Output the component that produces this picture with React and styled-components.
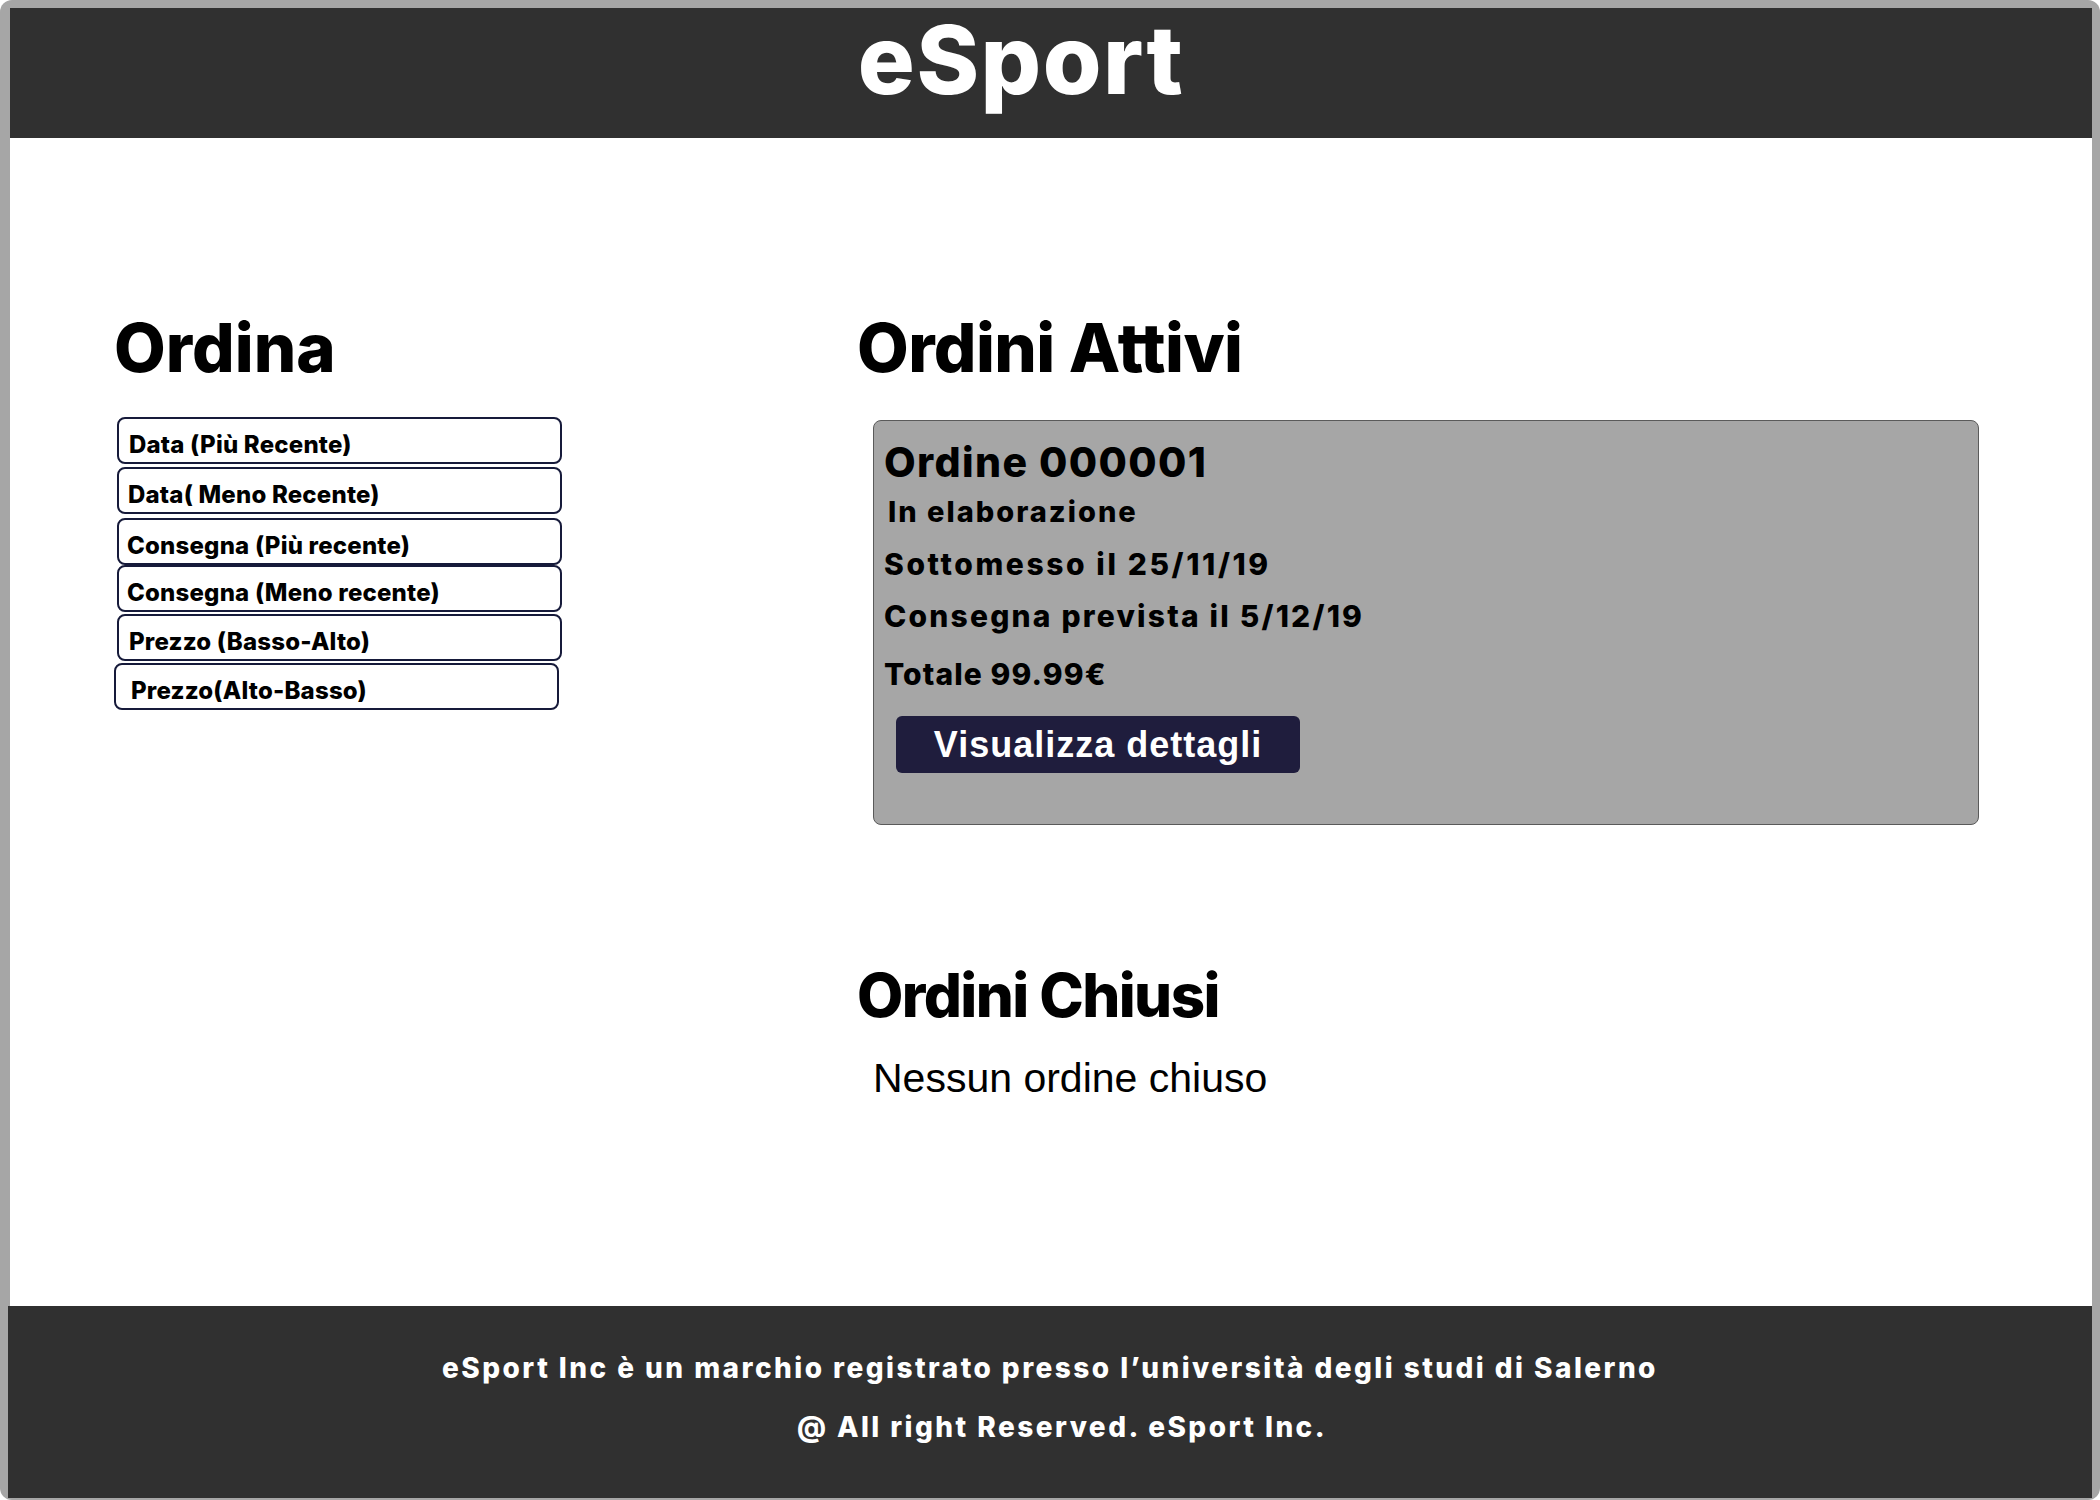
import React from "react";
import styled, { createGlobalStyle } from "styled-components";

const GlobalStyle = createGlobalStyle`
  html, body {
    margin: 0;
    padding: 0;
    background: #ffffff;
  }
  * {
    box-sizing: border-box;
  }
`;

const sortOptions = [
  { label: "Data (Più Recente)", gap: 0, pad: 10, shift: 0 },
  { label: "Data( Meno Recente)", gap: 3, pad: 9, shift: 0 },
  { label: "Consegna (Più recente)", gap: 4, pad: 8, shift: 0 },
  { label: "Consegna (Meno recente)", gap: 0, pad: 8, shift: 0 },
  { label: "Prezzo (Basso-Alto)", gap: 2, pad: 10, shift: 0 },
  { label: "Prezzo(Alto-Basso)", gap: 2, pad: 15, shift: -3 },
];

export default function App() {
  return (
    <>
      <GlobalStyle />
      <Frame>
        <Header>
          <Brand>eSport</Brand>
        </Header>

        <Main>
          <Column>
            <Title size={67}>Ordina</Title>
            <SortList>
              {sortOptions.map((opt) => (
                <SortButton
                  key={opt.label}
                  $gap={opt.gap}
                  $pad={opt.pad}
                  $shift={opt.shift}
                >
                  {opt.label}
                </SortButton>
              ))}
            </SortList>
          </Column>

          <Column>
            <Title size={67} $spacing={-0.6}>
              Ordini Attivi
            </Title>
            <OrderCard>
              <OrderTitle>Ordine 000001</OrderTitle>
              <OrderLine size={29} $top={14} $indent={4} $spacing={2}>
                In elaborazione
              </OrderLine>
              <OrderLine size={30} $top={23} $spacing={2.6}>
                Sottomesso il 25/11/19
              </OrderLine>
              <OrderLine size={30} $top={22} $spacing={2.2}>
                Consegna prevista il 5/12/19
              </OrderLine>
              <OrderLine size={30} $top={28} $spacing={1.1}>
                Totale 99.99€
              </OrderLine>
              <DetailButton>Visualizza dettagli</DetailButton>
            </OrderCard>

            <Title size={60} $top={140} $spacing={-1.6}>
              Ordini Chiusi
            </Title>
            <EmptyText>Nessun ordine chiuso</EmptyText>
          </Column>
        </Main>

        <Footer>
          <FooterLine>
            eSport Inc è un marchio registrato presso l’università degli studi
            di Salerno
          </FooterLine>
          <FooterLine $indent={24}>@ All right Reserved. eSport Inc.</FooterLine>
        </Footer>
      </Frame>
    </>
  );
}

const Frame = styled.div`
  width: 2100px;
  height: 1500px;
  background: #a6a6a6;
  border-radius: 12px;
  padding: 8px 8px 2px 10px;
  display: flex;
  flex-direction: column;
  font-family: Inter, "Noto Sans", sans-serif;
  font-variant-ligatures: none;
  color: #000;
`;

const Header = styled.header`
  height: 130px;
  background: #303030;
  display: flex;
  justify-content: center;
  align-items: flex-start;
  padding: 4px 60px 0 0;
`;

const Brand = styled.h1`
  margin: 0;
  font-size: 95px;
  line-height: 1;
  font-weight: 800;
  letter-spacing: 1.5px;
  color: #ffffff;
`;

const Main = styled.main`
  flex: 1;
  background: #ffffff;
  display: grid;
  grid-template-columns: 743px 1119px;
  align-items: start;
  padding: 176px 0 0 107px;
`;

const Column = styled.section`
  display: flex;
  flex-direction: column;
  align-items: flex-start;
`;

const Title = styled.h2`
  margin: ${(p) => p.$top || 0}px 0 0 -3px;
  font-size: ${(p) => p.size}px;
  letter-spacing: ${(p) => p.$spacing || 0}px;
  line-height: 1;
  font-weight: 800;
`;

const SortList = styled.div`
  margin-top: 36px;
  display: flex;
  flex-direction: column;
`;

const SortButton = styled.div`
  width: 445px;
  height: 47px;
  margin-top: ${(p) => p.$gap}px;
  margin-left: ${(p) => p.$shift}px;
  border: 2px solid #161a3a;
  border-radius: 8px;
  background: #ffffff;
  display: flex;
  align-items: flex-end;
  padding: 0 0 5px ${(p) => p.$pad}px;
  font-size: 24px;
  letter-spacing: 0.2px;
  line-height: 1;
  font-weight: 800;
`;

const OrderCard = styled.div`
  margin: 39px 0 0 13px;
  width: 1106px;
  height: 405px;
  background: #a6a6a6;
  border: 1px solid #5a5a5a;
  border-radius: 8px;
  padding: 21px 0 0 10px;
  display: flex;
  flex-direction: column;
  align-items: flex-start;
`;

const OrderTitle = styled.h3`
  margin: 0;
  font-size: 41px;
  letter-spacing: 1.4px;
  line-height: 1;
  font-weight: 800;
`;

const OrderLine = styled.p`
  margin: ${(p) => p.$top}px 0 0 ${(p) => p.$indent || 0}px;
  font-size: ${(p) => p.size}px;
  letter-spacing: ${(p) => p.$spacing || 0}px;
  line-height: 1;
  font-weight: 800;
`;

const DetailButton = styled.button`
  margin: 27px 0 0 12px;
  width: 404px;
  height: 57px;
  border: none;
  border-radius: 6px;
  background: #1f1d3d;
  color: #ffffff;
  font-family: "Liberation Sans", Arial, sans-serif;
  font-weight: 700;
  font-size: 36px;
  letter-spacing: 1px;
  line-height: 1;
  padding: 0;
  cursor: pointer;
`;

const EmptyText = styled.p`
  margin: 33px 0 0 13px;
  font-family: "Liberation Sans", Arial, sans-serif;
  font-size: 41px;
  line-height: 1;
  font-weight: 400;
`;

const Footer = styled.footer`
  height: 192px;
  margin-left: -2px;
  background: #303030;
  color: #ffffff;
  display: flex;
  flex-direction: column;
  align-items: center;
  padding-top: 48px;
  gap: 31px;
`;

const FooterLine = styled.p`
  margin: 0;
  padding-left: ${(p) => p.$indent || 0}px;
  font-size: 28px;
  letter-spacing: 2.45px;
  line-height: 1;
  font-weight: 800;
`;
